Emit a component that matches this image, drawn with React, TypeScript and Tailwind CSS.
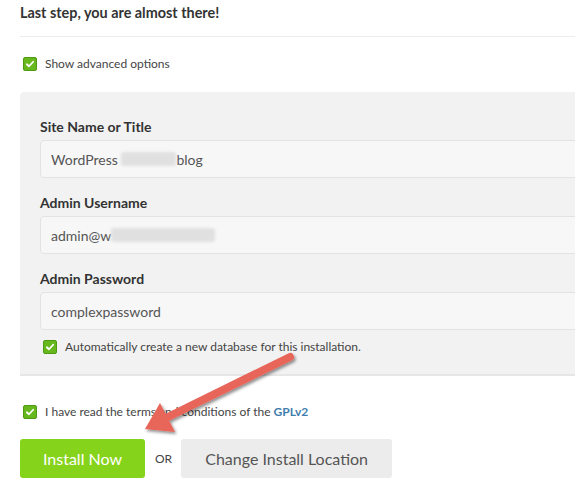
import type { ReactNode } from "react";

const font = { fontFamily: '"Lato", "Open Sans", sans-serif' };

function Check() {
  return (
    <span className="flex h-[14px] w-[14px] shrink-0 items-center justify-center rounded-[2px] border border-[#4f9a12] bg-[#66b81d]">
      <svg viewBox="0 0 12 12" className="h-[10px] w-[10px]">
        <path
          d="M2.2 6.3 L4.8 8.7 L9.8 3.3"
          fill="none"
          stroke="#fff"
          strokeWidth="2.2"
          strokeLinecap="round"
          strokeLinejoin="round"
        />
      </svg>
    </span>
  );
}

function Field({ label, children, first }: { label: string; children: ReactNode; first?: boolean }) {
  return (
    <div className={first ? "" : "mt-[15px]"}>
      <div className="text-[14px] font-bold leading-[20px] text-[#333]">{label}</div>
      <div className="mt-[3px] flex h-[38px] items-center rounded-[4px] border border-[#e3e3e3] bg-[#f7f7f7] pl-[10px] text-[14px] text-[#555]">
        {children}
      </div>
    </div>
  );
}

function Blur({ w }: { w: number }) {
  return (
    <span
      className="inline-block h-[14px] rounded-[3px] bg-[#e0e0e0] blur-[1.5px]"
      style={{ width: w }}
    />
  );
}

export default function App() {
  return (
    <div className="relative h-[499px] w-[575px] overflow-hidden bg-white pl-5" style={font}>
      <h1 className="mt-[3px] text-[14.4px] font-bold leading-[20px] text-[#333]">
        Last step, you are almost there!
      </h1>
      <div className="mt-[13px] border-b border-[#ececec]" />

      <label className="mt-[18px] flex items-center gap-[8px] pl-[3px] text-[12px] leading-[18px] text-[#444]">
        <Check />
        Show advanced options
      </label>

      {/* Advanced options panel */}
      <div className="mt-[19px] -mr-4 h-[284px] rounded-tl-[4px] border-b-2 border-[#e6e6e6] bg-[#f2f2f2] pl-5 pt-[25px]">
        <Field label="Site Name or Title" first>
          WordPress&nbsp;<Blur w={55} />
          blog
        </Field>
        <Field label="Admin Username">
          admin@w
          <Blur w={104} />
        </Field>
        <Field label="Admin Password">complexpassword</Field>
        <label className="mt-[9px] flex items-center gap-[8px] pl-[3px] text-[12px] leading-[16px] text-[#444]">
          <Check />
          Automatically create a new database for this installation.
        </label>
      </div>

      <label className="mt-[27px] flex items-center gap-[8px] pl-[3px] text-[12px] leading-[18px] text-[#444]">
        <Check />
        <span>
          I have read the terms and conditions of the{" "}
          <a className="font-bold text-[#3f7eae]">GPLv2</a>
        </span>
      </label>

      <div className="mt-[18px] flex items-center">
        <button className="h-[39px] w-[125px] rounded-[3px] bg-[#86d31b] text-[16px] text-white">
          Install Now
        </button>
        <span className="ml-[10px] mr-[9px] text-[12px] text-[#444]">OR</span>
        <button className="h-[39px] w-[211px] rounded-[3px] bg-[#ececec] text-[16px] text-[#555]">
          Change Install Location
        </button>
      </div>

      {/* Annotation arrow */}
      <svg className="pointer-events-none absolute left-0 top-0" width="575" height="499">
        <defs>
          <filter id="sh" x="-20%" y="-20%" width="140%" height="140%">
            <feDropShadow dx="1.5" dy="2" stdDeviation="1.5" floodColor="#000" floodOpacity="0.45" />
          </filter>
        </defs>
        <g filter="url(#sh)" fill="#e8655a">
          <line x1="290" y1="357" x2="168" y2="417" stroke="#e8655a" strokeWidth="8" strokeLinecap="round" />
          <polygon points="145,429 160,403 175,432" />
        </g>
      </svg>
    </div>
  );
}
